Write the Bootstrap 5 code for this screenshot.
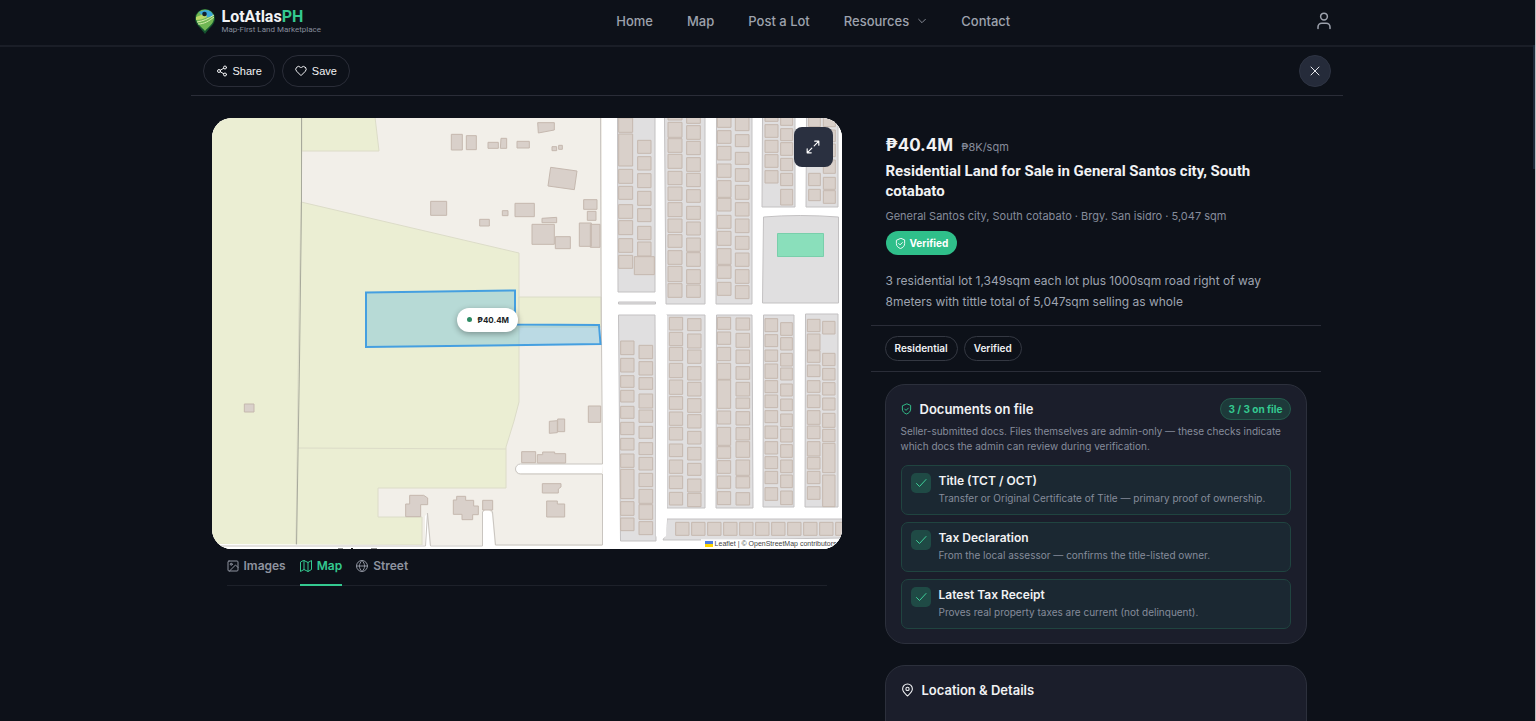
<!DOCTYPE html>
<html lang="en">
<head>
<meta charset="utf-8">
<meta name="viewport" content="width=device-width, initial-scale=1">
<title>LotAtlasPH – Residential Land for Sale in General Santos city</title>
<link rel="stylesheet" href="https://cdn.jsdelivr.net/npm/bootstrap@5.3.0/dist/css/bootstrap.min.css">
<style>
:root { --line: #2a2d38; --muted: #868c9b; --ink: #f1f2f4; --green: #34c990; }
body { background: #0d1119; color: var(--ink); font-family: Inter, "Liberation Sans", sans-serif; font-size: 13px; line-height: 20px; }
h1, h2, h3, p { margin: 0; }
svg { display: block; flex: none; }
.ico { fill: none; stroke: currentColor; stroke-width: 2; stroke-linecap: round; stroke-linejoin: round; }
.app { height: 100vh; overflow: hidden; padding-right: 2px; border-right: 1px solid #b9bdc1; }
.shell { max-width: 1152px; }
.site-head { height: 47px; border-bottom: 2px solid #1a1e27; padding-bottom: 3px; margin-right: -2px; padding-right: 2px; }
.brand { color: var(--ink); text-decoration: none; gap: 7px; }
.brand-name { font: 700 16px/16px Roboto, sans-serif; }
.brand-name span { color: var(--green); }
.brand-tag { font: 400 8px/9px Roboto, sans-serif; color: var(--muted); }
.main-links { gap: 34px; margin-right: 9px; }
.main-links a { color: #9da2ad; font-size: 13px; font-weight: 500; text-decoration: none; }
.user-btn { color: #9da2ad; background: none; border: 0; padding: 0; margin-right: 6px; }
.tools { height: 49px; border-bottom: 1px solid var(--line); padding: 0 12px; gap: 7px; }
.pill { border: 1px solid var(--line); border-radius: 16px; background: transparent; color: var(--ink); height: 32px; padding: 0 12px; gap: 5px; font: 400 11px/16px "Liberation Sans", sans-serif; }
.close-btn { width: 32px; height: 32px; border-radius: 50%; background: #252b3a; border: 1px solid #2e3443; color: #e6e8ec; padding: 0; }
.split { display: grid; grid-template-columns: minmax(0, 630fr) minmax(0, 450fr); gap: 29px; padding: 22px 22px 0 21px; }
.lot-map { aspect-ratio: 630 / 431; border-radius: 20px; overflow: hidden; background: #f2efe9; }
.expand-btn { right: 9px; top: 9px; width: 39px; height: 40px; border-radius: 8px; background: #2a3040; border: 0; color: #fff; padding: 0; }
.price-pin { left: 39%; top: 44%; height: 24px; border-radius: 12px; background: #fff; color: #1b1f27; padding: 0 9px 0 10px; gap: 5px; font-size: 8px; font-weight: 700; box-shadow: 0 2px 6px #0005; }
.price-pin i { width: 5px; height: 5px; border-radius: 50%; background: #2b8a62; }
.map-credit { right: 0; bottom: 0; background: #fffc; color: #444; font: 400 7px/10px "Liberation Sans", sans-serif; padding: 0 5px 0 4px; gap: 2px; }
.map-credit a { color: inherit; text-decoration: none; }
.view-tabs { margin: 0 15px; border-bottom: 1px solid #1d212a; gap: 14px; }
.view-tabs button { background: none; border: 0; border-bottom: 2px solid transparent; color: #8e939f; padding: 7px 0 8px; gap: 5px; font-size: 12px; font-weight: 600; margin-bottom: -1px; }
.view-tabs button.active { color: var(--green); border-color: var(--green); }
.inner { padding: 15px 15px 0; }
.price { font-size: 17px; line-height: 24px; font-weight: 700; }
.unit-price { font-size: 11px; color: var(--muted); }
.lot-title { font: 700 15px/20px Roboto, sans-serif; margin-top: 4px; }
.place { font-size: 11px; line-height: 16px; color: var(--muted); margin-top: 7px; }
.ok-badge { background: #2fbf8a; color: #fff; height: 24px; border-radius: 12px; font-size: 10px; font-weight: 700; padding: 0 9px; gap: 4px; margin-top: 7px; }
.about { font-size: 12px; line-height: 21px; color: #9ea4b0; margin: 15px 0 13px; }
.chips { border: solid var(--line); border-width: 1px 0; padding: 10px 14px; gap: 6px; margin-bottom: 12px; }
.chips span { border: 1px solid #343842; border-radius: 13px; font-size: 10px; line-height: 23px; font-weight: 600; padding: 0 9px; }
.panel { background: #1b1e2b; border: 1px solid #2c303c; border-radius: 20px; padding: 13px 15px 14px; margin: 0 14px 21px; }
.panel h2 { font-size: 13px; line-height: 22px; font-weight: 600; }
.details { min-height: 240px; }
.tally { background: #1d3a3a; border: 1px solid #245a4c; color: var(--green); border-radius: 11px; font-size: 10px; line-height: 20px; font-weight: 700; padding: 0 7px; }
.note { font-size: 10px; line-height: 15px; color: var(--muted); margin: 4px 0 11px; }
.doc { background: #1b2832; border: 1px solid #204440; border-radius: 7px; padding: 7px 9px; gap: 8px; height: 50px; margin-bottom: 7px; }
.doc:last-child { margin-bottom: 0; }
.doc-tick { width: 20px; height: 20px; border-radius: 5px; background: #1f4a45; color: #3fd09a; }
.doc h3 { font-size: 12px; line-height: 16px; font-weight: 600; }
.doc p { font-size: 10px; line-height: 18px; color: var(--muted); }
.scroll-thumb { right: 0; top: 45px; width: 2px; height: 124px; background: #1f2b3a; }
</style>
</head>
<body>
<div class="app position-relative">
<header class="site-head d-flex align-items-center">
  <div class="shell container-fluid px-1 d-flex align-items-center justify-content-between">
    <a class="brand d-flex align-items-center" href="#">
      <svg width="20" height="25" viewBox="0 0 20 25"><path d="M10 25C7 20 0 16 0 9.500a10 9.500 0 0 1 20 0C20 16 13 20 10 25z" fill="#14532f"/><path d="M10 22C7 18 1 15 1 9a9 8.500 0 0 1 18 0c0 6-6 9-9 13z" fill="#6fb653"/><path d="M10 1a9 8 0 0 1 8.500 6L9 9 4 3z" fill="#3ba7d8"/><path d="M1 8c4-1 7-3 9-5l2 5c-3 2-7 3-11 3z" fill="#b9d968"/><path d="M2 13c6-1 11-3 17-7M3 15c6 0 11-3 16-7" stroke="#d9eeae" fill="none"/><circle cx="9.500" cy="5" r="2.300" fill="#12202c"/></svg>
      <span class="d-flex flex-column"><span class="brand-name">LotAtlas<span>PH</span></span><span class="brand-tag">Map-First Land Marketplace</span></span>
    </a>
    <nav class="main-links d-flex" aria-label="Main">
      <a href="#">Home</a><a href="#">Map</a><a href="#">Post a Lot</a>
      <a href="#" class="d-flex align-items-center gap-2">Resources <svg class="ico" width="10" height="10" viewBox="0 0 24 24"><path d="m4 8 8 8 8-8"/></svg></a>
      <a href="#">Contact</a>
    </nav>
    <button class="user-btn" aria-label="Account"><svg class="ico" width="18" height="20" viewBox="0 0 24 24"><circle cx="12" cy="6" r="4.500"/><path d="M4 22v-2a5 5 0 0 1 5-5h6a5 5 0 0 1 5 5v2"/></svg></button>
  </div>
</header>
<main class="shell mx-auto">
  <div class="tools d-flex align-items-center">
    <button class="pill d-flex align-items-center"><svg class="ico" width="12" height="12" viewBox="0 0 24 24"><circle cx="18" cy="5" r="3"/><circle cx="6" cy="12" r="3"/><circle cx="18" cy="19" r="3"/><path d="m8.600 13.500 6.800 4M15.400 6.500l-6.800 4"/></svg>Share</button>
    <button class="pill d-flex align-items-center"><svg class="ico" width="12" height="12" viewBox="0 0 24 24"><path d="M20.800 4.600a5.500 5.500 0 0 0-7.800 0L12 5.700l-1-1.100a5.500 5.500 0 0 0-7.800 7.800L12 21.200l8.800-8.800a5.500 5.500 0 0 0 0-7.800z"/></svg>Save</button>
    <button class="close-btn ms-auto d-flex align-items-center justify-content-center" aria-label="Close"><svg class="ico" width="12" height="12" viewBox="0 0 24 24"><path d="M4 4l16 16M20 4 4 20"/></svg></button>
  </div>
  <div class="split">
    <section>
      <div class="lot-map position-relative">
        <svg width="100%" height="100%" viewBox="212 118 630 431" preserveAspectRatio="xMidYMid slice" role="img" aria-label="Lot map">
          <path fill="#f2efe9" d="M212 118h630v431H212z"/>
          <g fill="#ebeed3" stroke="#dcdcc8">
            <path d="M211 117h91l-1 120-5 309-85-2z"/>
            <path d="M302 117h73l4 34h-77z"/>
            <path d="m301 202 218 51v149l-5 19-8 26v41H378v29h44v28H296l3-240z"/>
            <path d="M519 297h82v30h-82z"/><path d="m298 448 208 1" fill="none"/>
          </g>
          <path d="M301.500 118v84l-2 160-3 185" fill="none" stroke="#a7a99b"/>
          <path d="M602 118h240v431H602zM212 544l390 2v4H212zM602 464h-82a4.500 4.500 0 0 0 0 9h83zM425 516l2-2 3 35h-5zM482 514q5-9 10 0l3 35h-13z" fill="#fff"/>
          <path d="m600.500 118 .5 160 1.500 186h-82a4.500 4.500 0 0 0 0 10h82v71h-107l-3-33q-5-8-10 0v34h-52l-3-33-2 33H212" fill="none" stroke="#c9c5c0"/>
          <g fill="#e0dfe0" stroke="#c3c1c2">
            <path d="M617.500 117H655v175h-37zM618.500 302h37v2h-37zM618.500 315H655l1 226h-35.500zM664.500 117H705v187h-39zM666.500 315H705v193h-38zM716.500 117H752v187h-36zM716.500 315H752l1 193h-37zM762.500 117H795v90h-33zM806.500 117H838v90h-32zM763.500 217q36-3 75 0v86h-76zM763.500 315H794v192h-31zM805.500 314H838v193h-33zM667 519h176v19l-145 2h-35q3-4 4-21z"/>
          </g>
          <path d="M656 315h11v205l-1 16q-5 6-10 0z" fill="#fff"/><path d="M777.500 233.500h46v23h-46z" fill="#8adfbb" stroke="#79cfab"/>
          <g id="homes" fill="#d9d0ca" stroke="#c5b8af" stroke-width="3" transform="translate(520 110) scale(.33333)">
            <path d="M53 38h50v22l-48 9zM92 172l79 11-8 56-79-11zM96 110h14v12H96zM116 106h11v12h-11zM191 269h40v29h-40zM202 304h26v27h-26zM66 325l44-3v16H66zM36 343h67v60H36zM106 380h45v36h-45zM178 339h36v70h-36zM211 343h29v69h-29zM-15 280h58v40h-58zM-53 302h17v15h-17zM-121 328h29v20h-29zM-268 274h48v42h-48zM-206 73h33v47h-33zM-161 77h30v42h-30zM-96 97h31v18h-31zM-57 85h17v30h-19zM-9 94h37v20H-9z"/>
            <path d="M-827 882h29v24h-29zM205 888h37v49h-37zM88 934l24-2v36l-24 2zM113 927h21v38h-21zM5 1025h42v33H5zM52 1034h16v-8h36v5h33v28H52zM67 1121h56v10l-8 6v12H67zM80 1173h32v9h22v39H80zM-331 1156h42l12 8v20h-21v36h-45v-38h12zM-200 1170h10v-11h27v12h24v17h14v26h-17v15h-32v-16h-26zM-112 1171h30v29h-30z"/>
          </g>
          <path d="m366 292.500 149-2v34l84 .5 1.500 19L366 347z" fill="#56b4dc" fill-opacity=".35" stroke="#459fe0" stroke-width="2"/>
          <path d="M338 549h5M351 548.500h2M371 549h6" stroke="#222"/>
        </svg>
        <button class="expand-btn position-absolute d-flex align-items-center justify-content-center" aria-label="Expand map"><svg class="ico" width="14" height="14" viewBox="0 0 24 24"><path d="M15 2h7v7M9 22H2v-7M22 2l-8 8M2 22l8-8"/></svg></button>
        <div class="price-pin position-absolute d-flex align-items-center"><i></i>₱40.4M</div>
        <div class="map-credit position-absolute d-flex align-items-center"><svg width="8" height="6"><path fill="#4c7be1" d="M0 0h8v3H0z"/><path fill="#ffd500" d="M0 3h8v3H0z"/></svg><a href="#">Leaflet</a> | © <a href="#">OpenStreetMap contributors</a></div>
      </div>
      <div class="view-tabs d-flex" role="tablist">
        <button role="tab" class="d-flex align-items-center"><svg class="ico" width="12" height="12" viewBox="0 0 24 24"><rect x="2" y="2" width="20" height="20" rx="2"/><circle cx="8.500" cy="8.500" r="2"/><path d="m22 15-5-5L5 22"/></svg>Images</button>
        <button role="tab" class="active d-flex align-items-center" aria-selected="true"><svg class="ico" width="12" height="12" viewBox="0 0 24 24"><path d="M1 5v18l7-4 8 4 7-4V1l-7 4-8-4zM8 1v18M16 5v18"/></svg>Map</button>
        <button role="tab" class="d-flex align-items-center"><svg class="ico" width="12" height="12" viewBox="0 0 24 24"><circle cx="12" cy="12" r="11"/><path d="M1 12h22M12 1c7 7 7 15 0 22-7-7-7-15 0-22z"/></svg>Street</button>
      </div>
    </section>
    <section>
      <div class="inner">
        <div class="d-flex align-items-baseline gap-2"><span class="price">₱40.4M</span><span class="unit-price">₱8K/sqm</span></div>
        <h1 class="lot-title">Residential Land for Sale in General Santos city, South cotabato</h1>
        <p class="place">General Santos city, South cotabato · Brgy. San isidro · 5,047 sqm</p>
        <span class="ok-badge d-inline-flex align-items-center"><svg class="ico" width="11" height="11" viewBox="0 0 24 24"><path d="M12 1 3 5v7c0 6 4 9 9 11 5-2 9-5 9-11V5zM8 12l3 3 5-5"/></svg>Verified</span>
        <p class="about">3 residential lot 1,349sqm each lot plus 1000sqm road right of way 8meters with tittle total of 5,047sqm selling as whole</p>
      </div>
      <div class="chips d-flex"><span>Residential</span><span>Verified</span></div>
      <section class="panel">
        <div class="d-flex align-items-center gap-2">
          <svg class="ico" width="11" height="12" viewBox="0 0 24 24" color="#34c990"><path d="M12 1 3 5v7c0 6 4 9 9 11 5-2 9-5 9-11V5zM8 12l3 3 5-5"/></svg>
          <h2>Documents on file</h2><span class="tally ms-auto">3 / 3 on file</span>
        </div>
        <p class="note">Seller-submitted docs. Files themselves are admin-only — these checks indicate which docs the admin can review during verification.</p>
        <div class="doc d-flex"><span class="doc-tick d-flex align-items-center justify-content-center"><svg class="ico" width="12" height="12" viewBox="0 0 24 24"><path d="m3 13 6 6L22 5"/></svg></span><div><h3>Title (TCT / OCT)</h3><p>Transfer or Original Certificate of Title — primary proof of ownership.</p></div></div>
        <div class="doc d-flex"><span class="doc-tick d-flex align-items-center justify-content-center"><svg class="ico" width="12" height="12" viewBox="0 0 24 24"><path d="m3 13 6 6L22 5"/></svg></span><div><h3>Tax Declaration</h3><p>From the local assessor — confirms the title-listed owner.</p></div></div>
        <div class="doc d-flex"><span class="doc-tick d-flex align-items-center justify-content-center"><svg class="ico" width="12" height="12" viewBox="0 0 24 24"><path d="m3 13 6 6L22 5"/></svg></span><div><h3>Latest Tax Receipt</h3><p>Proves real property taxes are current (not delinquent).</p></div></div>
      </section>
      <section class="panel details">
        <div class="d-flex align-items-center gap-2"><svg class="ico" width="13" height="14" viewBox="0 0 24 24"><path d="M12 23C8 19 3 15 3 10a9 9 0 0 1 18 0c0 5-5 9-9 13z"/><circle cx="12" cy="10" r="3"/></svg><h2>Location &amp; Details</h2></div>
      </section>
    </section>
  </div>
</main>
<div class="scroll-thumb position-absolute"></div>
</div>
<script src="https://cdn.jsdelivr.net/npm/bootstrap@5.3.0/dist/js/bootstrap.bundle.min.js"></script>
<script>
// Rows of homes in each subdivision column: [x, width, top, bottom, top, bottom, ...]
const rows = [
  [296,42,24,67,72,168,178,220,229,268,284,325,332,374,386,427,436,475],
  [353,40,91,130,140,180,191,233,244,286,296,335,349,389,396,438],
  [343,60,440,494],
  [444,42,20,30,37,82,86,127,133,175,184,224,231,271,278,320,327,367,374,412,422,463,469,515,521,562],
  [500,41,20,40,47,88,94,134,143,184,190,230,239,277,289,328,336,375,384,424,428,469,479,521,525,562],
  [592,41,20,52,62,100,109,150,162,202,212,262,265,303,316,355,364,406,416,463,467,505,517,556],
  [646,41,20,62,74,110,127,163,176,214,226,268,278,318,327,368,379,418,429,469,479,520,527,566],
  [735,39,20,34,44,82,91,127,134,172,182,219],
  [782,36,20,46,56,92,98,136,145,182,190,227,238,285],
  [866,35,20,50,60,90,190,227,238,272],
  [910,36,20,50,60,95,102,140,150,190,202,238,242,280],
  [302,40,693,734,745,786,797,832,841,876,889,925,937,974,985,1020,1032,1072,1078,1166,1175,1216,1224,1262],
  [357,41,706,746,755,795,803,838,852,894,900,937,949,985,998,1034,1042,1080,1090,1130,1138,1180,1184,1228,1235,1274],
  [448,40,622,660,667,707,712,752,760,803,810,853,860,898,906,946,952,990,1002,1040,1050,1090,1098,1136,1147,1185],
  [503,40,626,662,672,714,720,760,770,810,817,858,866,907,914,954,964,1002,1012,1050,1060,1096,1107,1146,1150,1190],
  [592,40,622,658,666,703,712,752,760,808,810,895,903,942,952,1006,1010,1045,1052,1090,1098,1135,1145,1184],
  [648,41,624,660,670,712,720,760,770,808,817,858,864,895,905,945,953,990,995,1042,1050,1096,1100,1134,1148,1185],
  [735,38,626,665,674,710,720,754,762,805,812,848,855,893,902,938,948,985,995,1032,1040,1076,1084,1121,1133,1171],
  [782,35,638,676,683,720,730,768,774,810,822,858,867,902,912,950,957,996,1004,1042,1050,1088,1095,1133,1143,1184],
  [862,38,628,665,672,720,722,757,765,800,812,847,855,893,902,943,948,986,995,1038,1042,1077,1084,1121,1130,1168],
  [908,37,634,672,730,767,775,810,818,855,864,900,910,952,958,995,1000,1088,1095,1190]
];
let d = '';
for (const [x, w, ...ys] of rows)
  for (let i = 0; i < ys.length; i += 2) d += `M${x} ${ys[i]}h${w}V${ys[i + 1]}h${-w}z`;
for (let x = 467; x < 960; x += 48) d += `M${x} 1237h40v39h-40z`;
const homes = document.createElementNS('http://www.w3.org/2000/svg', 'path');
homes.setAttribute('d', d);
document.getElementById('homes').append(homes);
</script>
</body>
</html>
